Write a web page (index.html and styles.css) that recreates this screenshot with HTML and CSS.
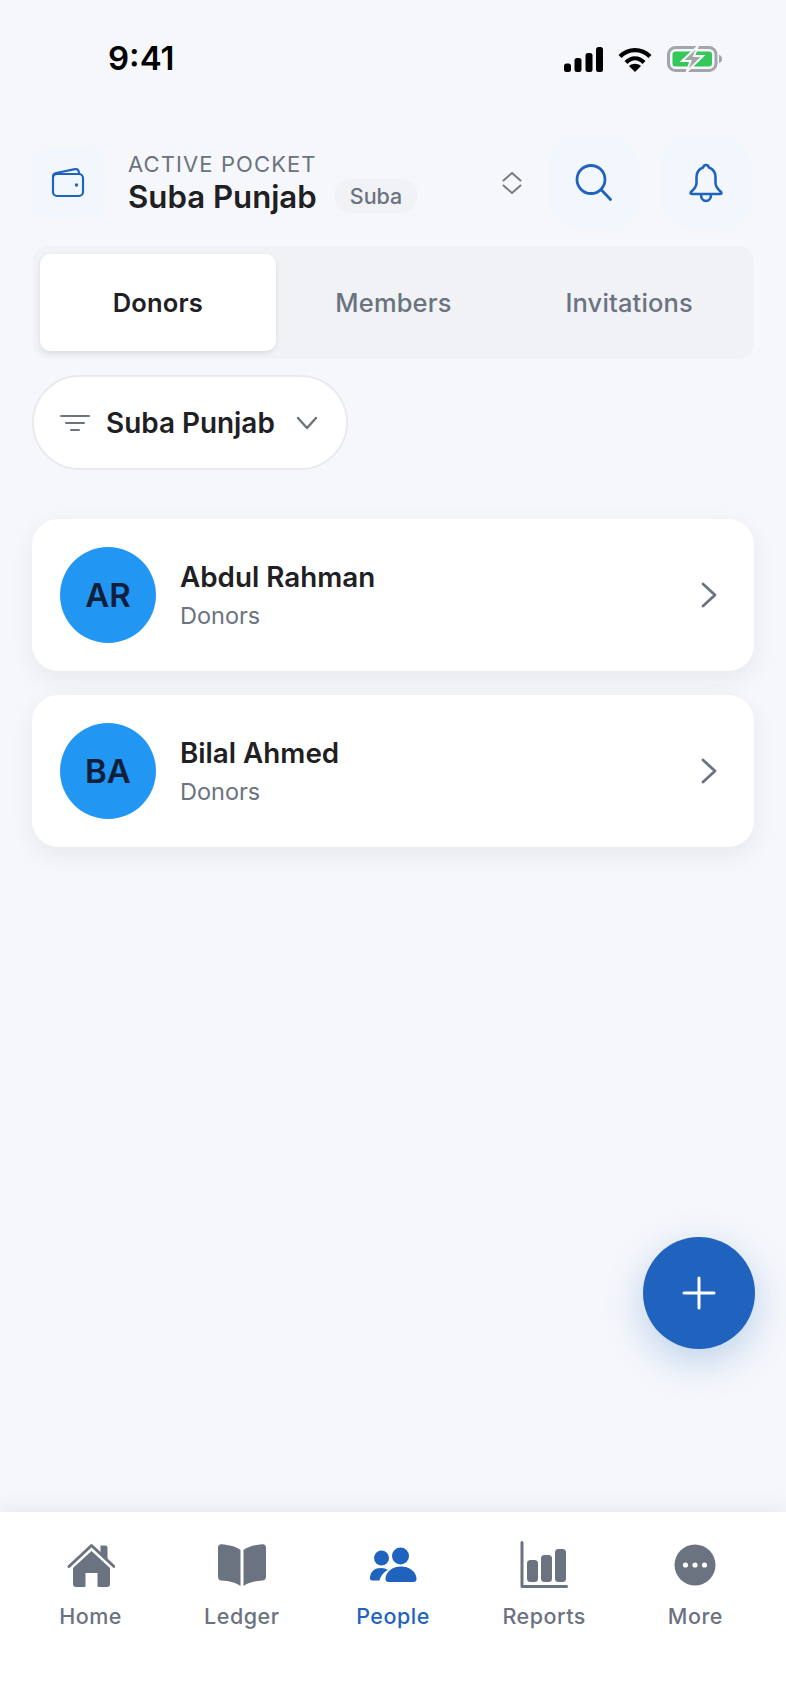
FILE: index.html
```html
<!DOCTYPE html>
<html lang="en">
<head>
  <meta charset="UTF-8" />
  <meta name="viewport" content="width=device-width, initial-scale=1" />
  <title>People – Donors</title>
  <link rel="stylesheet" href="styles.css">
</head>
<body>
  <div class="app">

    <!-- Status bar -->
    <div class="status-bar">
      <span class="time">9:41</span>
      <div class="status-icons">
        <svg width="39" height="25" viewBox="0 0 39 25" fill="#000">
          <rect x="0" y="16.500" width="7" height="8.500" rx="2.500"/>
          <rect x="10.500" y="11" width="7" height="14" rx="2.500"/>
          <rect x="21.500" y="6" width="7" height="19" rx="2.500"/>
          <rect x="32" y="0" width="7" height="25" rx="2.500"/>
        </svg>
        <svg width="34" height="25" viewBox="0 0 34 25" fill="none" stroke="#000" stroke-width="4.200">
          <path d="M2 9.500C10.500 1 23.500 1 32 9.500"/>
          <path d="M8 15.500C13.500 10 20.500 10 26 15.500"/>
          <path d="M17 25l-6-6c3.500-3 8.500-3 12 0z" fill="#000" stroke="none"/>
        </svg>
        <svg width="55" height="26" viewBox="0 0 55 26">
          <rect x="1.500" y="1.500" width="47.500" height="23" rx="7" fill="none" stroke="#a3a5a8" stroke-width="3"/>
          <rect x="5.500" y="5.500" width="39.500" height="15" rx="3" fill="#34c759"/>
          <path d="M52 9c2 .6 3 2 3 4s-1 3.400-3 4z" fill="#a3a5a8"/>
          <path d="M31 0L15 15h8.500L19.500 26 36 10h-9z" fill="#a3a5a8" stroke="#f5f7fb" stroke-width="2"/>
        </svg>
      </div>
    </div>

    <!-- Pocket header -->
    <header class="pocket-header">
      <div class="wallet-tile">
        <svg width="34" height="32" viewBox="0 0 34 32" fill="none" stroke="#1f63bf" stroke-width="2.200" stroke-linejoin="round" stroke-linecap="round">
          <path d="M2 9.500C2 7.500 3 6.500 5 6L24 2.200C26 1.800 27.500 3 28 5.500"/>
          <rect x="2" y="7" width="30" height="22" rx="4"/>
          <circle cx="25.500" cy="18" r="1.700" fill="#1f63bf" stroke="none"/>
        </svg>
      </div>
      <div class="pocket-info">
        <div class="pocket-label">ACTIVE POCKET</div>
        <div class="pocket-name-row">
          <span class="pocket-name">Suba Punjab</span>
          <span class="pocket-chip">Suba</span>
        </div>
      </div>
      <svg class="updown" width="20" height="24" viewBox="0 0 20 24" fill="none" stroke="#757a84" stroke-width="2" stroke-linecap="round" stroke-linejoin="round">
        <path d="M1.500 9.500L10 2l8.500 7.500"/>
        <path d="M1.500 14.500L10 22l8.500-7.500"/>
      </svg>
      <button class="icon-btn">
        <svg width="37" height="37" viewBox="0 0 37 37" fill="none" stroke="#1f63bf" stroke-width="2.800" stroke-linecap="round">
          <circle cx="16" cy="15.500" r="14"/>
          <path d="M26 25.500L35.500 35.500"/>
        </svg>
      </button>
      <button class="icon-btn">
        <svg width="34" height="40" viewBox="0 0 34 40" fill="none" stroke="#1f63bf" stroke-width="2.600" stroke-linecap="round" stroke-linejoin="round">
          <path d="M17 2c-1.500 0-2.500 1-3 2.500C10 6 7.500 9.500 7.500 14v6c0 3-2 6-5.500 9-.8 1-.3 2 1 2h28c1.300 0 1.800-1 1-2-3.500-3-5.500-6-5.500-9v-6c0-4.500-2.500-8-6.500-9.500C19.500 3 18.500 2 17 2z"/>
          <path d="M12 31.500c0 4 2.200 6.500 5 6.500s5-2.500 5-6.500"/>
        </svg>
      </button>
    </header>

    <!-- Tabs -->
    <div class="tabs">
      <div class="tab active">Donors</div>
      <div class="tab">Members</div>
      <div class="tab">Invitations</div>
    </div>

    <!-- Filter -->
    <div class="filter-pill">
      <svg width="30" height="18" viewBox="0 0 30 18" fill="none" stroke="#6b7280" stroke-width="2" stroke-linecap="round">
        <path d="M1 2h28"/>
        <path d="M6 9h18"/>
        <path d="M11 16h8"/>
      </svg>
      <span class="filter-text">Suba Punjab</span>
      <svg class="filter-caret" width="22" height="14" viewBox="0 0 22 14" fill="none" stroke="#6b7280" stroke-width="2.400" stroke-linecap="round" stroke-linejoin="round">
        <path d="M2 2l9 10 9-10"/>
      </svg>
    </div>

    <!-- People list -->
    <div class="people-list">
      <div class="person-card">
        <div class="avatar">AR</div>
        <div class="person-info">
          <div class="person-name">Abdul Rahman</div>
          <div class="person-role">Donors</div>
        </div>
        <svg class="row-arrow" width="16" height="26" viewBox="0 0 16 26" fill="none" stroke="#6b7280" stroke-width="2.800" stroke-linecap="round" stroke-linejoin="round">
          <path d="M2 2l12 11L2 24"/>
        </svg>
      </div>
      <div class="person-card">
        <div class="avatar">BA</div>
        <div class="person-info">
          <div class="person-name">Bilal Ahmed</div>
          <div class="person-role">Donors</div>
        </div>
        <svg class="row-arrow" width="16" height="26" viewBox="0 0 16 26" fill="none" stroke="#6b7280" stroke-width="2.800" stroke-linecap="round" stroke-linejoin="round">
          <path d="M2 2l12 11L2 24"/>
        </svg>
      </div>
    </div>

    <button class="fab">
      <svg width="34" height="34" viewBox="0 0 34 34" fill="none" stroke="#fff" stroke-width="3" stroke-linecap="round">
        <path d="M17 2v30"/>
        <path d="M2 17h30"/>
      </svg>
    </button>

    <!-- Bottom nav -->
    <nav class="bottom-nav">
      <div class="nav-item">
        <div class="nav-icon">
          <svg width="48" height="46" viewBox="0 0 48 46" fill="#6b7280">
            <path d="M2 24.500L24.500 3.500 47 24.500" fill="none" stroke="#6b7280" stroke-width="3" stroke-linecap="round" stroke-linejoin="round"/>
            <path d="M33.500 3.500h5c1 0 2 1 2 2v12l-7-6.500z"/>
            <path d="M24.500 9L43 26v16c0 2-1 3-3 3h-8c-1 0-1.500-.5-1.500-1.500V31h-12v12.500c0 1-.5 1.500-1.500 1.500H9c-2 0-3-1-3-3V26z"/>
          </svg>
        </div>
        <span>Home</span>
      </div>
      <div class="nav-item">
        <div class="nav-icon">
          <svg width="48" height="42" viewBox="0 0 48 42" fill="#6b7280">
            <path d="M0 3.500C0 1.500 1.500 0 3.500 0.200 11 0.800 18 2.500 22.500 6v36c-5-3.500-11-5-19-5.500C1.500 36.300 0 35 0 33z"/>
            <path d="M48 3.500C48 1.500 46.500 0 44.500 0.200 37 0.800 30 2.500 25.500 6v36c5-3.500 11-5 19-5.500 2-.2 3.500-1.500 3.500-3.500z"/>
          </svg>
        </div>
        <span>Ledger</span>
      </div>
      <div class="nav-item active">
        <div class="nav-icon">
          <svg width="48" height="36" viewBox="0 0 48 36" fill="#1f63bf">
            <circle cx="12.500" cy="11" r="7.500"/>
            <circle cx="31.500" cy="9" r="8.500"/>
            <path d="M1 30c1-6 5-9 11-9 3 0 5 .7 7 2-4 2-7.500 6-8.500 10.500h-7C1.500 33.500 .6 32 1 30z"/>
            <path d="M16.500 31c1-7 7.500-11.500 15.500-11.500S46.500 24 47.500 31c.4 2.500-1 4-3 4H19.500c-2 0-3.400-1.500-3-4z"/>
          </svg>
        </div>
        <span>People</span>
      </div>
      <div class="nav-item">
        <div class="nav-icon">
          <svg width="48" height="48" viewBox="0 0 48 48" fill="#6b7280">
            <path d="M2 1.500V45.500H46.500" fill="none" stroke="#6b7280" stroke-width="3" stroke-linecap="round" stroke-linejoin="round"/>
            <rect x="7" y="19" width="11" height="22" rx="3.500"/>
            <rect x="21" y="14" width="11" height="27" rx="3.500"/>
            <rect x="35" y="8" width="11" height="33" rx="3.500"/>
          </svg>
        </div>
        <span>Reports</span>
      </div>
      <div class="nav-item">
        <div class="nav-icon">
          <svg width="48" height="42" viewBox="0 0 48 42">
            <circle cx="24" cy="21" r="20.500" fill="#6b7280"/>
            <circle cx="14.500" cy="21" r="2.600" fill="#fff"/>
            <circle cx="24" cy="21" r="2.600" fill="#fff"/>
            <circle cx="33.500" cy="21" r="2.600" fill="#fff"/>
          </svg>
        </div>
        <span>More</span>
      </div>
    </nav>

  </div>
</body>
</html>
```

FILE: styles.css
```css
/* ------------------------------------------------------------------
   Global styles
------------------------------------------------------------------ */
*, *::before, *::after { box-sizing: border-box; }
html, body {
  margin: 0;
  height: 100%;
  font-family: "Inter", "Liberation Sans", sans-serif;
  background: #f5f7fb;
  color: #1f2023;
}
button { font-family: inherit; border: 0; padding: 0; cursor: pointer; }
svg { display: block; flex: none; }

.app {
  position: relative;
  height: 1706px;
  display: flex;
  flex-direction: column;
  overflow: hidden;
}

/* ------------------------------------------------------------------
   Status bar
------------------------------------------------------------------ */
.status-bar {
  height: 135px;
  padding: 41px 64px 0 108px;
  display: flex;
  justify-content: space-between;
  align-items: flex-start;
}
.time {
  font-size: 33px;
  line-height: 34px;
  font-weight: 600;
  color: #000;
}
.status-icons {
  display: flex;
  align-items: center;
  gap: 15px;
  padding-top: 5px;
}

/* ------------------------------------------------------------------
   Pocket header
------------------------------------------------------------------ */
.pocket-header {
  height: 95px;
  padding: 0 35px 0 32px;
  display: flex;
  align-items: center;
}
.wallet-tile {
  width: 72px;
  height: 70px;
  border-radius: 16px;
  background: #f2f7fe;
  display: flex;
  align-items: center;
  justify-content: center;
}
.pocket-info { margin-left: 24px; }
.pocket-label {
  font-size: 22px;
  line-height: 26px;
  letter-spacing: 1.1px;
  color: #6b7280;
}
.pocket-name-row {
  display: flex;
  align-items: center;
  gap: 17px;
  margin-top: 2px;
}
.pocket-name {
  font-size: 31.200px;
  line-height: 36px;
  font-weight: 600;
}
.pocket-chip {
  height: 34px;
  margin-top: -2px;
  padding: 0 16px;
  border-radius: 17px;
  background: #f0f2f6;
  color: #6b7280;
  font-size: 21.500px;
  font-weight: 500;
  line-height: 34px;
}
.updown { margin-left: auto; margin-right: 26px; }
.icon-btn {
  width: 91px;
  height: 95px;
  border-radius: 34px;
  background: #f2f7fe;
  display: flex;
  align-items: center;
  justify-content: center;
}
.icon-btn + .icon-btn { margin-left: 21px; }

/* ------------------------------------------------------------------
   Tabs
------------------------------------------------------------------ */
.tabs {
  margin: 16px 32px 0 33px;
  height: 113px;
  padding: 8px 7px;
  border-radius: 16px;
  background: #f0f2f6;
  display: grid;
  grid-template-columns: repeat(3, 1fr);
}
.tab {
  display: flex;
  align-items: center;
  justify-content: center;
  font-size: 25.500px;
  letter-spacing: 0.15px;
  font-weight: 500;
  color: #6b7280;
  border-radius: 10px;
}
.tab.active {
  background: #fff;
  color: #1f2023;
  font-weight: 600;
  box-shadow: 0 2px 5px rgba(31, 41, 55, 0.1);
}

/* ------------------------------------------------------------------
   Filter pill
------------------------------------------------------------------ */
.filter-pill {
  margin: 16px 0 0 32px;
  width: 316px;
  height: 95px;
  padding: 0 28px 0 26px;
  display: flex;
  align-items: center;
  border: 2px solid #e8eaee;
  border-radius: 48px;
  background: #fff;
}
.filter-text {
  margin-left: 16px;
  font-size: 27.900px;
  font-weight: 600;
}
.filter-caret { margin-left: auto; }

/* ------------------------------------------------------------------
   People list
------------------------------------------------------------------ */
.people-list {
  margin: 49px 32px 0 32px;
  display: flex;
  flex-direction: column;
  gap: 24px;
}
.person-card {
  height: 152px;
  padding: 0 37px 0 28px;
  display: flex;
  align-items: center;
  border-radius: 26px;
  background: #fff;
  box-shadow: 0 8px 24px rgba(31, 41, 55, 0.07);
}
.avatar {
  width: 96px;
  height: 96px;
  border-radius: 50%;
  background: #2196f3;
  color: #10203a;
  display: flex;
  align-items: center;
  justify-content: center;
  font-size: 33px;
  font-weight: 600;
}
.person-info { margin-left: 24px; }
.person-name {
  font-size: 27.800px;
  line-height: 32px;
  font-weight: 600;
}
.person-role {
  margin-top: 9px;
  font-size: 23.500px;
  line-height: 28px;
  color: #6b7280;
}
.row-arrow { margin-left: auto; }

/* ------------------------------------------------------------------
   Floating add button
------------------------------------------------------------------ */
.fab {
  position: absolute;
  right: 31px;
  top: 1237px;
  width: 112px;
  height: 112px;
  border-radius: 50%;
  background: #1f63bf;
  display: flex;
  align-items: center;
  justify-content: center;
  box-shadow: 0 12px 38px rgba(31, 99, 191, 0.26);
}

/* ------------------------------------------------------------------
   Bottom nav
------------------------------------------------------------------ */
.bottom-nav {
  margin-top: auto;
  height: 194px;
  padding: 29px 15px 0;
  background: #fff;
  box-shadow: 0 -4px 20px rgba(31, 41, 55, 0.07);
  display: grid;
  grid-template-columns: repeat(5, 1fr);
  align-items: start;
}
.nav-item {
  display: flex;
  flex-direction: column;
  align-items: center;
  gap: 13px;
  color: #6b7280;
  font-size: 21.500px;
  line-height: 28px;
  font-weight: 500;
  letter-spacing: 0.5px;
}
.nav-icon {
  height: 48px;
  display: flex;
  align-items: center;
}
.nav-item.active { color: #1f63bf; }
```
